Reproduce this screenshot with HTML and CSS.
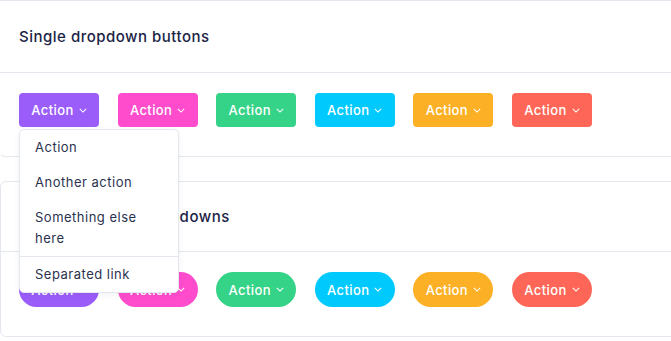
FILE: index.html
```html
<!DOCTYPE html>
<html lang="en">
<head>
  <meta charset="UTF-8">
  <meta name="viewport" content="width=device-width, initial-scale=1.0">
  <title>Dropdowns</title>
  <link rel="stylesheet" href="styles.css">
</head>
<body>
  <!-- Single dropdown buttons -->
  <div class="card card-top">
    <div class="card-header">
      <h4>Single dropdown buttons</h4>
    </div>
    <div class="card-body">
      <div class="btn-row">
        <div class="dropdown">
          <button class="btn btn-purple">Action <svg class="caret" viewBox="0 0 10 6"><path d="M1 1l4 4 4-4"/></svg></button>
          <div class="dropdown-menu">
            <a href="#" class="dropdown-item">Action</a>
            <a href="#" class="dropdown-item">Another action</a>
            <a href="#" class="dropdown-item">Something else here</a>
            <div class="divider"></div>
            <a href="#" class="dropdown-item">Separated link</a>
          </div>
        </div>
        <button class="btn btn-pink">Action <svg class="caret" viewBox="0 0 10 6"><path d="M1 1l4 4 4-4"/></svg></button>
        <button class="btn btn-green">Action <svg class="caret" viewBox="0 0 10 6"><path d="M1 1l4 4 4-4"/></svg></button>
        <button class="btn btn-cyan">Action <svg class="caret" viewBox="0 0 10 6"><path d="M1 1l4 4 4-4"/></svg></button>
        <button class="btn btn-yellow">Action <svg class="caret" viewBox="0 0 10 6"><path d="M1 1l4 4 4-4"/></svg></button>
        <button class="btn btn-red">Action <svg class="caret" viewBox="0 0 10 6"><path d="M1 1l4 4 4-4"/></svg></button>
      </div>
    </div>
  </div>

  <!-- Rounded dropdown buttons -->
  <div class="card card-pill">
    <div class="card-header">
      <h4>Rounded button dropdowns</h4>
    </div>
    <div class="card-body">
      <div class="btn-row">
        <button class="btn btn-pill btn-purple">Action <svg class="caret" viewBox="0 0 10 6"><path d="M1 1l4 4 4-4"/></svg></button>
        <button class="btn btn-pill btn-pink">Action <svg class="caret" viewBox="0 0 10 6"><path d="M1 1l4 4 4-4"/></svg></button>
        <button class="btn btn-pill btn-green">Action <svg class="caret" viewBox="0 0 10 6"><path d="M1 1l4 4 4-4"/></svg></button>
        <button class="btn btn-pill btn-cyan">Action <svg class="caret" viewBox="0 0 10 6"><path d="M1 1l4 4 4-4"/></svg></button>
        <button class="btn btn-pill btn-yellow">Action <svg class="caret" viewBox="0 0 10 6"><path d="M1 1l4 4 4-4"/></svg></button>
        <button class="btn btn-pill btn-red">Action <svg class="caret" viewBox="0 0 10 6"><path d="M1 1l4 4 4-4"/></svg></button>
      </div>
    </div>
  </div>
</body>
</html>
```

FILE: styles.css
```css
/* Page */
body {
  margin: 0;
  font-family: Inter, "Noto Sans", sans-serif;
  letter-spacing: 0.5px;
  background-color: #fff;
  color: #1b2446;
  overflow: hidden;
}

/* Cards */
.card {
  width: 700px;
  border: 1px solid #e3e7ee;
  border-radius: 6px;
  background-color: #fff;
}
.card-top {
  border-top-left-radius: 0;
  border-left-color: transparent;
  margin-left: -1px;
  margin-bottom: 24px;
}
.card-header {
  height: 71px;
  display: flex;
  align-items: center;
  padding: 0 18px;
  border-bottom: 1px solid #e3e7ee;
}
.card-pill .card-header {
  height: 69px;
}
.card-header h4 {
  margin: 0;
  font-size: 15px;
  font-weight: 500;
  color: #1b2446;
}
.card-top .card-header {
  padding-left: 19px;
}
.card-body {
  padding: 20px 18px 29px;
}
.card-top .card-body {
  padding-left: 19px;
}

/* Buttons */
.btn-row {
  display: flex;
  gap: 18.6px;
}
.dropdown {
  position: relative;
}
.btn {
  height: 34px;
  width: 80px;
  display: flex;
  align-items: center;
  justify-content: center;
  gap: 5px;
  border: none;
  border-radius: 4px;
  color: #fff;
  font-family: inherit;
  font-size: 13px;
  font-weight: 500;
  letter-spacing: 0.4px;
  cursor: pointer;
}
.btn-pill {
  height: 35px;
  border-radius: 18px;
}
.caret {
  width: 8px;
  height: 5px;
  fill: none;
  stroke: #fff;
  stroke-width: 1.3;
}
.btn-purple { background-color: #9b5dfa; }
.btn-pink { background-color: #fe4ccd; }
.btn-green { background-color: #35d387; }
.btn-cyan { background-color: #00c9fe; }
.btn-yellow { background-color: #fcb025; }
.btn-red { background-color: #fe6757; }

/* Dropdown menu */
.dropdown-menu {
  position: absolute;
  top: 36px;
  left: 0;
  z-index: 2;
  width: 158px;
  background-color: #fff;
  border: 1px solid #e3e7ee;
  border-radius: 5px;
  box-shadow: 0 2px 6px rgba(30, 40, 70, 0.06);
}
.dropdown-item {
  display: block;
  padding: 7px 15px;
  line-height: 21px;
  font-size: 13px;
  color: #2b3350;
  text-decoration: none;
}
.divider {
  height: 1px;
  background-color: #e3e7ee;
  margin: 0;
}
```
